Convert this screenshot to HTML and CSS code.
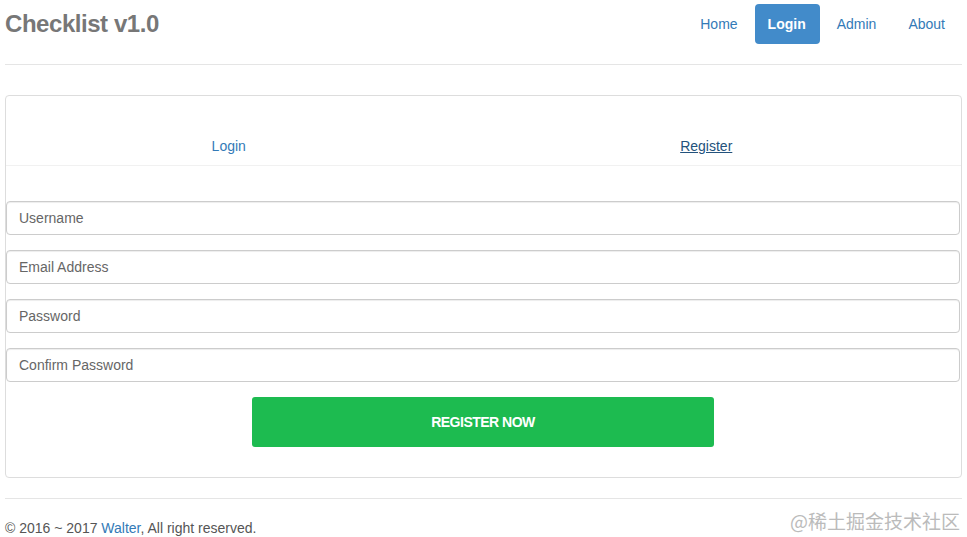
FILE: index.html
```html
<!DOCTYPE html>
<html lang="en">
<head>
    <meta charset="UTF-8">
    <meta name="viewport" content="width=device-width, initial-scale=1.0">
    <title>Checklist v1.0</title>
    <link rel="stylesheet" href="styles.css">
</head>
<body>
    <div class="header">
        <h3 class="brand">Checklist v1.0</h3>
        <ul class="nav">
            <li><a href="#">Home</a></li>
            <li class="active"><a href="#">Login</a></li>
            <li><a href="#">Admin</a></li>
            <li><a href="#">About</a></li>
        </ul>
    </div>

    <div class="panel">
        <div class="tabs-wrap">
            <div class="tabs">
                <a href="#" class="tab">Login</a>
                <a href="#" class="tab current">Register</a>
            </div>
        </div>

        <form class="register-form">
            <input type="text" class="form-control" placeholder="Username">
            <input type="email" class="form-control" placeholder="Email Address">
            <input type="password" class="form-control" placeholder="Password">
            <input type="password" class="form-control" placeholder="Confirm Password">
            <button type="button" class="register-btn">REGISTER NOW</button>
        </form>
    </div>

    <div class="footer">
        <p>&copy; 2016 ~ 2017 <a href="#">Walter</a>, All right reserved.</p>
        <span class="watermark">@稀土掘金技术社区</span>
    </div>
</body>
</html>
```

FILE: styles.css
```css
body {
    font-family: 'Liberation Sans', Arial, sans-serif;
    font-size: 14px;
    line-height: 20px;
    color: #333;
    margin: 0;
    padding: 0 5px;
    background: #fff;
}

a {
    color: #337ab7;
    text-decoration: none;
}

.header {
    display: flex;
    justify-content: space-between;
    align-items: center;
    padding-top: 4px;
    padding-bottom: 20px;
    border-bottom: 1px solid #e5e5e5;
}

.brand {
    margin: 0;
    font-size: 24px;
    line-height: 40px;
    font-weight: bold;
    color: #777;
    letter-spacing: -0.45px;
}

.nav {
    display: flex;
    gap: 2px;
    list-style: none;
    margin: 0 2px 0 0;
    padding: 0;
}

.nav a {
    display: block;
    padding: 10px 15px;
    border-radius: 4px;
}

.nav .active a {
    background: #428bca;
    color: #fff;
    padding: 10px 14px 10px 13px;
    font-weight: bold;
}

.panel {
    position: relative;
    margin-top: 30px;
    border: 1px solid #ddd;
    border-radius: 4px;
    padding-bottom: 30px;
}

.tabs-wrap {
    border-bottom: 1px solid #f1f1f1;
}

.tabs {
    display: grid;
    grid-template-columns: 1fr 1fr;
    margin: 0 16px 0 -16px;
}

.tab {
    text-align: center;
    padding: 40px 0 9px;
}

.tab.current {
    color: #23527c;
    text-decoration: underline;
}

.register-form {
    display: flex;
    flex-direction: column;
    align-items: center;
    gap: 15px;
    margin: 35px 1px 0 0;
}

.form-control {
    box-sizing: border-box;
    width: 100%;
    height: 34px;
    padding: 6px 12px;
    margin: 0;
    font-family: inherit;
    font-size: 14px;
    color: #555;
    border: 1px solid #ccc;
    border-radius: 4px;
    box-shadow: inset 0 1px 1px rgba(0,0,0,0.075);
}

.form-control::placeholder {
    color: #666;
}

.register-btn {
    width: 462px;
    height: 50px;
    border: none;
    border-radius: 3px;
    background: #1dbb50;
    color: #fff;
    font-family: inherit;
    font-size: 14px;
    font-weight: bold;
    letter-spacing: -0.5px;
    cursor: pointer;
}

.footer {
    position: relative;
    margin-top: 20px;
    border-top: 1px solid #e5e5e5;
}

.footer p {
    margin: 19px 0 0;
    color: #555;
}

.watermark {
    position: absolute;
    right: 2px;
    top: 10px;
    font-family: 'Noto Sans CJK SC', sans-serif;
    font-size: 19px;
    line-height: 24px;
    color: #bbb;
}
```
